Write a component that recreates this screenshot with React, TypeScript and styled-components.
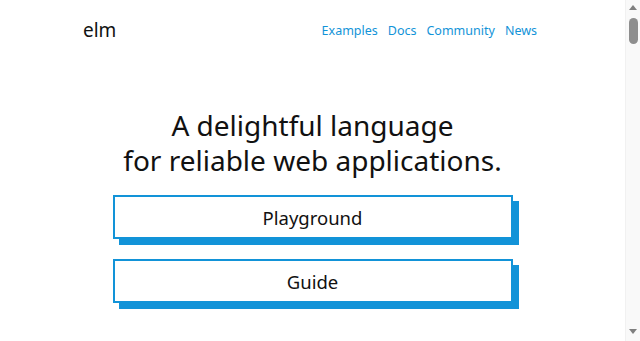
import React from "react";
import styled, { createGlobalStyle } from "styled-components";

const Global = createGlobalStyle`
  html, body { margin: 0; padding: 0; background: #fff; }
  body { font-family: "Noto Sans", "Open Sans", sans-serif; color: #111; }
  a { text-decoration: none; }
`;

const Page = styled.div`
  min-height: 4100px;
  padding-right: 15px;
  display: flex;
  flex-direction: column;
`;

const ScrollRail = styled.div`
  position: fixed;
  top: 0;
  right: 0;
  width: 15px;
  height: 100vh;
  background: #f9f9f9;
  border-left: 1px solid #f1f1f1;
  box-sizing: border-box;
  display: flex;
  flex-direction: column;
  align-items: center;
`;

const Arrow = styled.div<{ $down?: boolean }>`
  width: 0;
  height: 0;
  margin-top: ${(p) => (p.$down ? "auto" : "5px")};
  margin-bottom: ${(p) => (p.$down ? "7px" : "0")};
  border-left: 4.5px solid transparent;
  border-right: 4.5px solid transparent;
  ${(p) =>
    p.$down
      ? "border-top: 5px solid #7f7f7f;"
      : "border-bottom: 5px solid #7f7f7f;"}
`;

const Thumb = styled.div`
  width: 9px;
  height: 26px;
  margin-top: 8px;
  border-radius: 5px;
  background: #8e8e8e;
`;

const Header = styled.header`
  display: flex;
  align-items: center;
  justify-content: space-between;
  height: 60px;
  padding: 0 88px 0 83px;
`;

const Logo = styled.a`
  font-size: 19px;
  color: #111;
`;

const Nav = styled.nav`
  display: flex;
  gap: 10px;
`;

const NavLink = styled.a`
  font-size: 12.5px;
  color: #1293d8;
`;

const Hero = styled.section`
  display: flex;
  flex-direction: column;
  align-items: center;
  padding-top: 48px;
`;

const Title = styled.h1`
  margin: 0 0 17px;
  font-weight: 400;
  font-size: 28px;
  line-height: 35px;
  text-align: center;
  color: #111;
`;

const Buttons = styled.div`
  display: flex;
  flex-direction: column;
  gap: 20px;
`;

const BigButton = styled.a`
  box-sizing: border-box;
  width: 400px;
  height: 44px;
  display: flex;
  align-items: center;
  justify-content: center;
  border: 2px solid #1293d8;
  box-shadow: 6px 6px 0 #1293d8;
  background: #fff;
  color: #111;
  font-size: 18.5px;
`;

export default function App() {
  return (
    <>
      <Global />
      <Page>
        <Header>
          <Logo href="#">elm</Logo>
          <Nav>
            <NavLink href="#">Examples</NavLink>
            <NavLink href="#">Docs</NavLink>
            <NavLink href="#">Community</NavLink>
            <NavLink href="#">News</NavLink>
          </Nav>
        </Header>
        <Hero>
          <Title>
            A delightful language
            <br />
            for reliable web applications.
          </Title>
          <Buttons>
            <BigButton href="#">Playground</BigButton>
            <BigButton href="#">Guide</BigButton>
          </Buttons>
        </Hero>
      </Page>
      <ScrollRail aria-hidden="true">
        <Arrow />
        <Thumb />
        <Arrow $down />
      </ScrollRail>
    </>
  );
}
